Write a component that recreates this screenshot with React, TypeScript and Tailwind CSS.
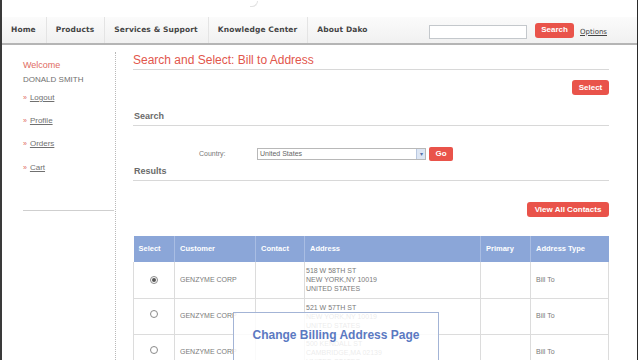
import React from "react";

const navItems = ["Home", "Products", "Services & Support", "Knowledge Center", "About Dako"];

const rows = [
  { addr: ["518 W 58TH ST", "NEW YORK,NY 10019", "UNITED STATES"], checked: true },
  { addr: ["521 W 57TH ST", "NEW YORK,NY 10019", "UNITED STATES"], checked: false },
  { addr: ["500 KENDALL ST", "CAMBRIDGE,MA 02139", "UNITED STATES"], checked: false },
];

function Radio({ checked }: { checked: boolean }) {
  return (
    <span className="inline-flex w-[8px] h-[8px] rounded-full border border-[#8a8a8a] bg-white items-center justify-center">
      {checked && <span className="w-[4px] h-[4px] rounded-full bg-[#555]" />}
    </span>
  );
}

export default function App() {
  return (
    <div className="w-[640px] h-[360px] overflow-hidden flex bg-white" style={{ fontFamily: '"Liberation Sans", Arial, sans-serif' }}>
      <div className="w-[2px] h-full bg-[#3a3a3a] shrink-0" />
      <div className="w-[635px] h-full flex flex-col shrink-0">
        <div className="h-[17px] shrink-0 relative">
          <div className="absolute left-[248px] top-[1px] w-[8px] h-[6px] border-b border-r border-[#e2e2e2] rounded-br-full" />
        </div>
        <div className="h-[28px] shrink-0 flex items-center bg-gradient-to-b from-[#fbfbfb] to-[#f1f1f1] border-b-2 border-[#b5b5b5] pr-[30px]" style={{ fontFamily: '"DejaVu Sans", Verdana, sans-serif' }}>
          {navItems.map((n, i) => (
            <div key={n} className={`h-full flex items-center pl-[9px] pr-[10px] text-[7.5px] font-bold text-[#454545] tracking-[0.12px] ${i < navItems.length - 1 ? "border-r border-[#e4e4e4]" : ""}`}>
              {n}
            </div>
          ))}
          <div className="ml-auto w-[98px] h-[14px] border border-[#c4c8cc] bg-white mt-[3px]" />
          <button className="ml-[8px] w-[39px] h-[15px] rounded-[3px] bg-[#e9534a] text-white text-[8px] font-bold flex items-center justify-center" style={{ fontFamily: '"Liberation Sans", Arial, sans-serif' }}>
            Search
          </button>
          <span className="ml-[6px] mt-[4px] text-[7px] underline text-[#444]">Options</span>
        </div>
        <div className="flex flex-1 min-h-0">
          <div className="w-[114px] shrink-0 flex flex-col pl-[21px] pt-[13px] text-[8px] border-r border-dotted border-[#b9b9b9] mt-[7px]">
            <div className="text-[#e06b62] text-[9px] leading-[10px] -mt-[5px]">Welcome</div>
            <div className="text-[#707070] leading-[10px] mt-[5px]">DONALD SMITH</div>
            {["Logout", "Profile", "Orders", "Cart"].map((t, i) => (
              <div key={t} className={`flex items-center text-[#707070] leading-[10px] ${i === 0 ? "mt-[8px]" : i === 3 ? "mt-[14px]" : "mt-[13px]"}`}>
                <span className="text-[#e06b62] text-[7px] mr-[3px]">»</span>
                <span className="underline">{t}</span>
              </div>
            ))}
            <div className="mt-[37px] w-[91px] border-t border-[#cfcfcf]" />
          </div>
          <div className="w-[521px] shrink-0 pl-[17px] pr-[28px] flex flex-col">
            <div className="text-[12px] text-[#e2564c] mt-[8px] leading-[14px]">Search and Select: Bill to Address</div>
            <div className="border-t border-[#d8d8d8] mt-[2px]" />
            <div className="flex justify-end mt-[10px]">
              <button className="w-[37px] h-[15px] rounded-[3px] bg-[#e9534a] text-white text-[8px] font-bold flex items-center justify-center">Select</button>
            </div>
            <div className="text-[9px] font-bold text-[#6a6a6a] mt-[16px] leading-[10px] pl-[1px]">Search</div>
            <div className="border-t border-[#d8d8d8] mt-[4px]" />
            <div className="flex items-center mt-[21px]">
              <span className="ml-[66px] text-[7px] text-[#777] w-[58px]">Country:</span>
              <div className="w-[169px] h-[12px] border border-[#b8b8b8] bg-white flex items-center justify-between text-[7px] text-[#666] pl-[2px]">
                <span>United States</span>
                <span className="w-[9px] h-[10px] bg-[#dde6f4] border-l border-[#b9c8e0] flex items-center justify-center text-[#5670a8] text-[6px]">▾</span>
              </div>
              <button className="ml-[3px] w-[24px] h-[14px] rounded-[2px] bg-[#e9534a] text-white text-[8px] font-bold flex items-center justify-center">Go</button>
            </div>
            <div className="text-[9px] font-bold text-[#6a6a6a] mt-[5px] leading-[10px] pl-[1px]">Results</div>
            <div className="border-t border-[#d8d8d8] mt-[4px]" />
            <div className="flex justify-end mt-[21px]">
              <button className="w-[82px] h-[15px] rounded-[3px] bg-[#e9534a] text-white text-[8px] font-bold flex items-center justify-center">View All Contacts</button>
            </div>
            <div className="relative mt-[19px]">
              <table className="w-[476px] border-collapse text-[7px] text-[#7a7a7a]">
                <thead>
                  <tr className="bg-[#8ba6d8] text-white text-[7.5px] font-bold text-left h-[26px]">
                    <th className="w-[41px] pl-[5px] border-r border-[#a9bde3]">Select</th>
                    <th className="w-[81px] pl-[5px] border-r border-[#a9bde3]">Customer</th>
                    <th className="w-[49px] pl-[5px] border-r border-[#a9bde3]">Contact</th>
                    <th className="w-[176px] pl-[5px] border-r border-[#a9bde3]">Address</th>
                    <th className="w-[50px] pl-[5px] border-r border-[#a9bde3]">Primary</th>
                    <th className="pl-[5px]">Address Type</th>
                  </tr>
                </thead>
                <tbody>
                  {rows.map((r, i) => (
                    <tr key={i} className="h-[36px] border-b border-[#dcdcdc]">
                      <td className="border-l border-r border-[#dcdcdc] text-center align-middle"><Radio checked={r.checked} /></td>
                      <td className="border-r border-[#dcdcdc] pl-[5px]">GENZYME CORP</td>
                      <td className="border-r border-[#dcdcdc]"></td>
                      <td className="border-r border-[#dcdcdc] pl-[1px] leading-[9px]">
                        {r.addr.map((a) => <div key={a}>{a}</div>)}
                      </td>
                      <td className="border-r border-[#dcdcdc]"></td>
                      <td className="border-r border-[#dcdcdc] pl-[5px]">Bill To</td>
                    </tr>
                  ))}
                </tbody>
              </table>
              <div className="absolute left-[100px] top-[76px] w-[206px] h-[60px] border border-[#a3b4d6] bg-white/85 flex items-start justify-center pt-[13px]">
                <span className="text-[12px] font-bold text-[#5b79c2]">Change Billing Address Page</span>
              </div>
            </div>
          </div>
        </div>
      </div>
      <div className="w-[1px] h-full bg-[#2a2a2a] shrink-0" />
      <div className="w-[2px] h-full bg-white shrink-0" />
    </div>
  );
}
